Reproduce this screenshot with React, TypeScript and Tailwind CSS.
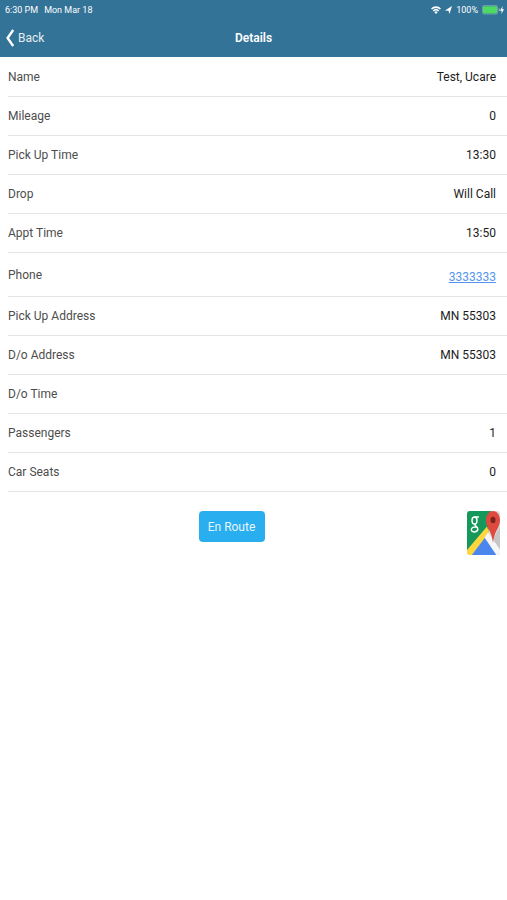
import clsx from "clsx";

type Detail = {
  label: string;
  value: string;
  href?: string;
};

const details: Detail[] = [
  { label: "Name", value: "Test, Ucare" },
  { label: "Mileage", value: "0" },
  { label: "Pick Up Time", value: "13:30" },
  { label: "Drop", value: "Will Call" },
  { label: "Appt Time", value: "13:50" },
  { label: "Phone", value: "3333333", href: "tel:3333333" },
  { label: "Pick Up Address", value: "MN 55303" },
  { label: "D/o Address", value: "MN 55303" },
  { label: "D/o Time", value: "" },
  { label: "Passengers", value: "1" },
  { label: "Car Seats", value: "0" },
];

const WifiIcon = () => (
  <svg viewBox="0 0 18 14" className="h-2 w-[10px]" fill="none" stroke="white" strokeWidth="3">
    <path d="M1 5.2a11.5 11.5 0 0 1 16 0" />
    <path d="M4.2 8.8a7 7 0 0 1 9.6 0" />
    <path d="M9 14 6 11a4 4 0 0 1 6 0z" fill="white" stroke="none" />
  </svg>
);

const LocationIcon = () => (
  <svg viewBox="0 0 12 14" preserveAspectRatio="none" className="h-2 w-[7px]" fill="white">
    <path d="M12 0 7.6 14 6 8.4 0 8z" />
  </svg>
);

const BatteryIcon = () => (
  <svg viewBox="0 0 18 10" className="h-[10px] w-[18px]">
    <rect x="0.5" y="0.5" width="15" height="8.6" rx="1.5" fill="none" stroke="#8fb3c6" strokeWidth="0.6" />
    <rect x="1" y="1.2" width="14" height="7.2" rx="0.8" fill="#4cd964" />
    <path d="M16.6 3.3v3a1.5 1.5 0 0 0 0-3z" fill="#8fb3c6" />
  </svg>
);

const BoltIcon = () => (
  <svg viewBox="0 0 6 10" preserveAspectRatio="none" className="h-2 w-1" fill="white">
    <path d="M4 0 0 5.8h2.6L2 10l4-5.800H3.400z" />
  </svg>
);

const MapsIcon = () => (
  <svg viewBox="0 0 34 45" className="h-[45px] w-[34px]">
    <defs>
      <clipPath id="tile">
        <rect width="33" height="44" rx="3" />
      </clipPath>
    </defs>
    <g clipPath="url(#tile)">
      <rect width="34" height="45" fill="#dcdcdc" />
      <path d="M0 0h24l-3 22L3 40H0z" fill="#16985a" />
      <path d="M25 30 34 14v30z" fill="#c6c6c6" />
      <path d="m18 24 14 21H3z" fill="#4a86ee" />
      <path d="M0 39 20 15.500l2 6L4 45H0z" fill="#fcd63c" />
      <path d="m17.500 26.500 3.500-5L34 40v5h-4z" fill="#f6f6f6" />
    </g>
    <path
      d="M26 0c-4 0-7 4-7 9 0 8 6 11 7 23 1-12 7-15 7-23 0-5-3-9-7-9z"
      fill="#de4b3e"
    />
    <ellipse cx="26" cy="9" rx="2.5" ry="3.3" fill="#7b231d" />
    <g fill="none" stroke="white" strokeWidth="1.4">
      <ellipse cx="7.5" cy="9.500" rx="2.500" ry="3.500" />
      <path d="M7.500 6h4.500M8.600 12.800c-2.200 2 2.200 2.600 2.200 5.200 0 3.800-6.500 3.800-6.500.8 0-2.400 2.700-3 5-2.800" />
    </g>
  </svg>
);

const DetailRow = ({ label, value, href }: Detail) => (
  <div
    className={clsx(
      "flex items-center justify-between border-b border-[#e4e4e4] pr-[11px]",
      href ? "h-11" : "h-[39px]"
    )}
  >
    <dt className="text-[#4d4d4d]">{label}</dt>
    <dd className="text-[#1c1c1c]">
      {href ? (
        <a href={href} className="block pt-1 text-[#5596ec] underline">
          {value}
        </a>
      ) : (
        value
      )}
    </dd>
  </div>
);

const App = () => {
  return (
    <div className="min-h-screen bg-white font-[Roboto,sans-serif] text-xs">
      <header className="bg-[#337397] text-white">
        <div className="flex h-5 items-center justify-between pr-[3px] pl-[5px] text-[9px]">
          <div className="flex gap-[6px]">
            <span>6:30 PM</span>
            <span>Mon Mar 18</span>
          </div>
          <div className="flex items-center gap-1">
            <WifiIcon />
            <LocationIcon />
            <span>100%</span>
            <div className="flex items-center">
              <BatteryIcon />
              <BoltIcon />
            </div>
          </div>
        </div>
        <nav className="grid h-[37px] grid-cols-3 items-center pb-px">
          <button type="button" className="flex items-center gap-1 pl-[6px] text-[#e3edf2]">
            <svg viewBox="0 0 8 18" className="h-[18px] w-2" fill="none" stroke="white" strokeWidth="2.4">
              <path d="M7.2 1 1.6 9l5.600 8" />
            </svg>
            Back
          </button>
          <h1 className="text-center font-semibold">Details</h1>
        </nav>
      </header>

      <main>
        <dl className="pt-px pl-2">
          {details.map((detail) => (
            <DetailRow key={detail.label} {...detail} />
          ))}
        </dl>

        <div className="grid grid-cols-[1fr_auto_1fr] items-start pt-[19px] pr-[6px]">
          <button
            type="button"
            className="col-start-2 mr-[38px] h-[31px] w-[66px] rounded bg-[#29aeef] text-[#e6f6fe]"
          >
            En Route
          </button>
          <button type="button" aria-label="Open map" className="justify-self-end">
            <MapsIcon />
          </button>
        </div>
      </main>
    </div>
  );
};

export default App;
